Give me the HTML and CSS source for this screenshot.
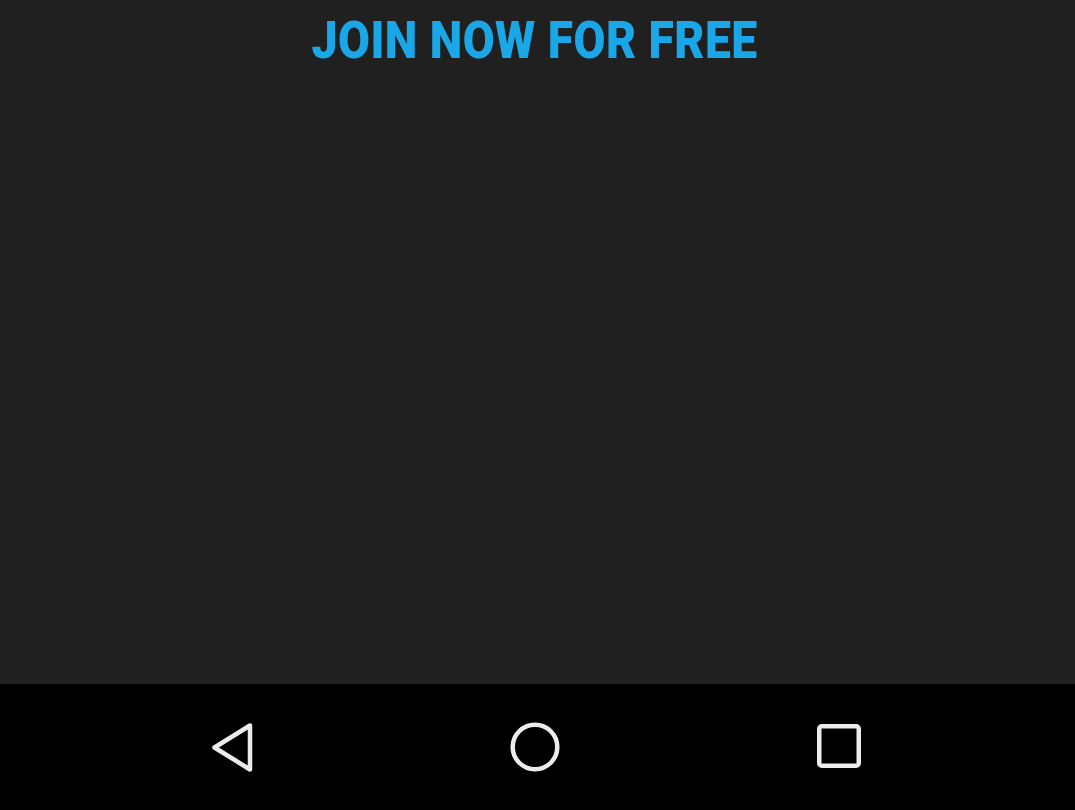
FILE: index.html
```html
<!DOCTYPE html>
<html>
<head>
<meta charset="utf-8">
<link rel="stylesheet" href="styles.css">
</head>
<body>
<div class="screen">
  <main class="content">
    <h1 class="title">JOIN NOW FOR FREE</h1>
  </main>
  <nav class="navbar">
    <svg class="nav-icon" width="60" height="60" viewBox="0 0 60 60">
      <path d="M13.5 30.5 L49 8.5 L49 52.5 Z" fill="none" stroke="#ececec" stroke-width="4.5" stroke-linejoin="round"/>
    </svg>
    <svg class="nav-icon" width="60" height="60" viewBox="0 0 60 60">
      <circle cx="30" cy="30" r="22.3" fill="none" stroke="#ececec" stroke-width="4.5"/>
    </svg>
    <svg class="nav-icon" width="60" height="60" viewBox="0 0 60 60">
      <rect x="10.25" y="9.25" width="39.5" height="39.5" rx="2.5" fill="none" stroke="#ececec" stroke-width="4.5"/>
    </svg>
  </nav>
</div>
</body>
</html>
```
FILE: styles.css
```css
html, body {
  margin: 0;
  padding: 0;
  background: #202020;
}
.screen {
  width: 1075px;
  height: 810px;
  display: flex;
  flex-direction: column;
  overflow: hidden;
}
.content {
  flex: 1;
  background: #202020;
  display: flex;
  justify-content: center;
  padding-right: 6px;
}
.title {
  margin: 0;
  padding-top: 13px;
  font-family: "Roboto", sans-serif;
  font-weight: 900;
  font-size: 52px;
  line-height: 56px;
  color: #1aa7e8;
  letter-spacing: 0.5px;
  transform: scaleX(0.89);
  height: 56px;
  white-space: nowrap;
}
.navbar {
  height: 126px;
  background: #000;
  display: flex;
  align-items: center;
  justify-content: center;
  gap: 244px;
  padding-right: 5px;
}
.nav-icon {
  display: block;
}
```
